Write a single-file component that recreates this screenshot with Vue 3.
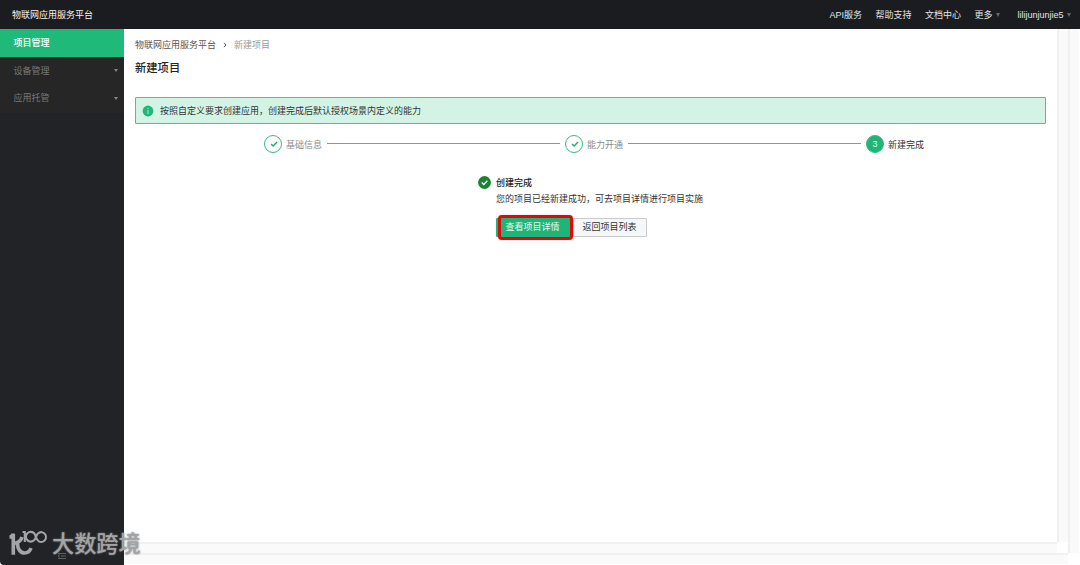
<script setup>
import { ref } from 'vue'

const links = ['API服务', '帮助支持', '文档中心']

const menus = [
  { label: '项目管理', children: false },
  { label: '设备管理', children: true },
  { label: '应用托管', children: true }
]
const activeMenu = ref('项目管理')

const steps = ['基础信息', '能力开通', '新建完成']
const current = ref(2)
</script>

<template>
  <div class="page">
    <header class="topbar">
      <span class="brand">物联网应用服务平台</span>
      <nav class="links">
        <a v-for="link in links" :key="link">{{ link }}</a>
        <a class="more">更多<i class="caret" /></a>
        <a class="user">lilijunjunjie5<i class="caret" /></a>
      </nav>
    </header>

    <div class="body">
      <aside class="sidebar">
        <ul class="menu">
          <li
            v-for="menu in menus"
            :key="menu.label"
            :class="{ active: menu.label === activeMenu }"
            @click="activeMenu = menu.label"
          >
            {{ menu.label }}
            <i v-if="menu.children" class="caret small" />
          </li>
        </ul>
      </aside>

      <div class="outer">
        <div class="inner">
          <main class="content">
            <div class="breadcrumb">
              <span>物联网应用服务平台</span>
              <svg class="sep" viewBox="0 0 4 6"><path d="M1 .8 3 3 1 5.2" /></svg>
              <span class="here">新建项目</span>
            </div>
            <h1>新建项目</h1>

            <div class="notice">
              <svg viewBox="0 0 12 12">
                <circle cx="6" cy="6" r="5.4" fill="#1fb87a" />
                <path d="M6 5.1v3.8M6 3v1.1" stroke="#b5ecd3" stroke-width="1" />
              </svg>
              <span>按照自定义要求创建应用，创建完成后默认授权场景内定义的能力</span>
            </div>

            <div class="steps">
              <template v-for="(step, i) in steps" :key="step">
                <div class="step" :class="{ current: i === current }">
                  <span class="dot">
                    <svg v-if="i < current" viewBox="0 0 8 8"><path d="M1.1 4.1 3.2 6 7 2" /></svg>
                    <template v-else>{{ i + 1 }}</template>
                  </span>
                  <span class="name">{{ step }}</span>
                </div>
                <i v-if="i < steps.length - 1" class="line" />
              </template>
            </div>

            <section class="result">
              <svg class="ok" viewBox="0 0 13 13">
                <circle cx="6.5" cy="6.5" r="6.4" fill="#1b8135" />
                <path d="m3.8 6.6 2 1.9 3.6-3.7" />
              </svg>
              <div>
                <h2>创建完成</h2>
                <p>您的项目已经新建成功，可去项目详情进行项目实施</p>
                <div class="actions">
                  <button type="button" class="primary">查看项目详情<i class="mark" /></button>
                  <button type="button">返回项目列表</button>
                </div>
              </div>
            </section>
          </main>
          <i class="track-y" />
          <i class="track-x" />
        </div>
        <i class="track-y" />
        <i class="track-x" />
      </div>
    </div>

    <div class="watermark">
      <svg viewBox="0 0 40 28">
        <path d="M1.500 8.200C3.500 8 5 7 5 4.500M5.300 5v20.800M14 8C13 12 10.500 13.500 7 14.500M9.500 14.500c0 5 2.500 9.500 7 9.500 3 0 5.500-2 6.500-5" stroke-width="3.600" />
        <path d="M14.500 3h2.300v10M27.500 7.800a4.800 4.900 0 1 0-1.500 3.500C28 9.500 28 6.500 30 4.400a4.800 4.900 0 1 1-1.500 4.500" stroke-width="2.100" />
      </svg>
      <span>大数跨境</span>
    </div>
    <svg class="fold" viewBox="0 0 8 6"><path d="M0 .5h8M3 3h5M0 5.500h8M2 1.500 0 3l2 1.500" /></svg>
  </div>
</template>

<style>
body {
  margin: 0;
}
</style>

<style scoped>
.page {
  position: relative;
  display: flex;
  flex-direction: column;
  height: 565px;
  overflow: hidden;
  background: #fff;
  color: #333;
  font-family: "Liberation Sans", "Noto Sans CJK SC", sans-serif;
  font-size: 9px;
  line-height: 14px;
}

.topbar {
  display: flex;
  justify-content: space-between;
  box-sizing: border-box;
  height: 29px;
  padding: 8px 9px 0 12px;
  background: #1b1c20;
  color: #e4e4e5;
}

.brand {
  color: #f4f4f4;
}

.links {
  display: flex;
  gap: 13.5px;
}

.links a {
  display: flex;
  align-items: center;
  height: 14px;
}

.links .more {
  margin-right: 4px;
}

.caret {
  margin-left: 3.5px;
  border: 2.5px solid transparent;
  border-top: 4px solid #66676a;
  border-bottom: 0;
}

.caret.small {
  border-width: 3px 2px 0;
  border-top-color: #858585;
}

.body {
  display: flex;
  flex: 1;
}

.sidebar {
  width: 124px;
  background: #222327;
  border-bottom-left-radius: 4px;
}

.menu {
  margin: 0;
  padding: 0 0 1px;
  background: #262626;
  list-style: none;
}

.menu li {
  display: flex;
  align-items: center;
  justify-content: space-between;
  box-sizing: border-box;
  height: 27.7px;
  padding: 0 6px 0 13.5px;
  color: #777;
}

.menu li.active {
  background: #1fb979;
  color: #fff;
  font-weight: 500;
}

/* nested scroll areas, each with its own pair of scrollbar tracks */
.outer,
.inner {
  display: grid;
  flex: 1;
  grid-template-columns: 1fr 11px;
  grid-template-rows: 1fr 11px;
}

.outer {
  padding: 0 1px 1px 0;
}

.track-y {
  border-left: 2px solid #f0f0f0;
  background: #fafafa;
}

.track-x {
  border-top: 2px solid #f0f0f0;
  background: #fafafa;
}

.content {
  padding: 9px 11px 0;
}

.breadcrumb {
  display: flex;
  align-items: center;
  height: 14px;
  color: #555;
}

.sep {
  width: 4px;
  height: 6px;
  margin: 0 7px;
  fill: none;
  stroke: #555;
}

.here {
  color: #999;
}

h1 {
  margin: 8px 0 0;
  color: #222;
  font-size: 11.3px;
  font-weight: 500;
  line-height: 16px;
}

.notice {
  display: flex;
  align-items: center;
  box-sizing: border-box;
  height: 27px;
  margin-top: 21px;
  padding-left: 6px;
  border: 1px solid #55bd91;
  border-radius: 1px;
  background: #d3f3e5;
}

.notice svg {
  width: 12px;
  height: 12px;
  margin-right: 6px;
}

.steps {
  display: flex;
  align-items: center;
  width: 660px;
  margin: 11px 0 0 129px;
}

.step {
  display: flex;
  align-items: center;
  gap: 4px;
  color: #8c8c8c;
}

.name {
  padding-top: 2px;
}

.dot {
  display: flex;
  align-items: center;
  justify-content: center;
  box-sizing: border-box;
  width: 18px;
  height: 18px;
  border: 1px solid #35b882;
  border-radius: 50%;
}

.dot svg {
  width: 8px;
  height: 8px;
  margin-left: 1px;
  fill: none;
  stroke: #1fae75;
  stroke-width: 1.5;
}

.step.current {
  color: #333;
}

.current .dot {
  background: #1fb579;
  color: #e2f7ed;
}

.line {
  flex: 1;
  height: 1px;
  margin: 0 5px 1px;
  background: #4bb88e;
}

.result {
  display: flex;
  margin: 23px 0 0 343px;
}

.ok {
  width: 13px;
  height: 13px;
  margin-right: 5px;
}

.ok path {
  fill: none;
  stroke: #fff;
  stroke-width: 1.4;
}

h2 {
  margin: 0;
  color: #222;
  font-size: 9px;
  font-weight: 500;
  line-height: 14px;
}

.result p {
  margin: 2px 0 0;
}

.actions {
  display: flex;
  margin-top: 12px;
}

button {
  position: relative;
  box-sizing: border-box;
  width: 74px;
  height: 19px;
  padding: 0;
  border: 1px solid #c9cbce;
  border-radius: 1px;
  background: #f6f7f9;
  color: #333;
  font: inherit;
  line-height: 17px;
}

button.primary {
  z-index: 1;
  width: 76.5px;
  padding-right: 3.5px;
  border-color: #1fb579;
  background: #1fb579;
  color: #e6f9f0;
}

/* highlight ring drawn over the button edge */
.mark {
  position: absolute;
  top: -4px;
  left: 1px;
  box-sizing: border-box;
  width: 75px;
  height: 25px;
  border: 3px solid #d90b0b;
  border-radius: 4px;
  box-shadow: 0 0 1px #a33;
}

.watermark {
  position: absolute;
  left: 8px;
  bottom: 4px;
  display: flex;
  align-items: flex-start;
  color: #a3a4a5;
  font-size: 22.2px;
  font-weight: 500;
  line-height: 32px;
  text-shadow: 0 0 2px #777;
}

.watermark svg {
  width: 40px;
  height: 28px;
  margin-right: 4px;
  fill: none;
  stroke: #a3a4a5;
}

.fold {
  position: absolute;
  left: 58px;
  bottom: 6px;
  width: 8px;
  height: 6px;
  fill: none;
  stroke: #77787a;
  stroke-width: 0.7;
}
</style>
